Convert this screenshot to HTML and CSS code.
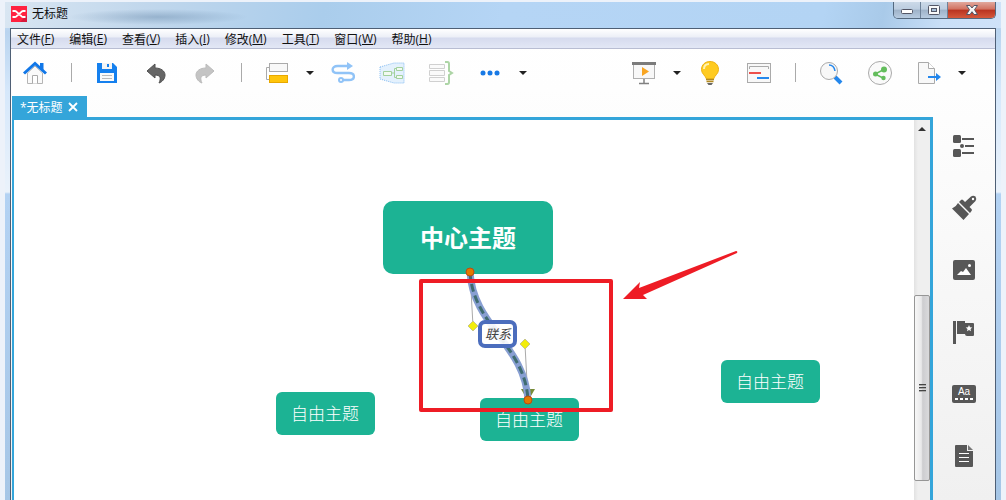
FILE: index.html
```html
<!DOCTYPE html>
<html lang="zh-CN">

<head>
    <meta charset="UTF-8">
    <meta name="viewport" content="width=device-width, initial-scale=1.0">
    <title>无标题</title>
    <link rel="stylesheet" href="styles.css">
</head>

<body>
    <div class="window">
        <header class="titlebar">
            <svg class="logo" width="16" height="16" viewBox="0 0 16 16">
                <rect width="16" height="16" fill="#ff2240" />
                <path d="M9 16L16 9V16Z" fill="#d8193c" />
                <path d="M1.500 5H4C6 5 6 7.500 8 7.500s2-2.500 4-2.500h2.500M1.500 11H4C6 11 6 8.500 8 8.500s2 2.500 4 2.500h2.500" fill="none" stroke="#fff" stroke-width="2" />
            </svg>
            <h1>无标题</h1>
            <div class="smudge"></div>
            <div class="window-buttons">
                <button class="min" aria-label="最小化">
                    <svg width="14" height="10" viewBox="0 0 14 10"><rect x="1.500" y="4.500" width="11" height="4" rx="1" fill="#fff" stroke="#535666" /></svg>
                </button>
                <button class="max" aria-label="最大化">
                    <svg width="14" height="12" viewBox="0 0 14 12"><rect x="1.500" y="1.500" width="11" height="9" rx="1" fill="#f8f8f8" stroke="#535666" /><rect x="4.500" y="4.500" width="5" height="3" fill="#a9c0d8" stroke="#535666" /></svg>
                </button>
                <button class="close" aria-label="关闭">
                    <svg width="14" height="12" viewBox="0 0 14 12"><path d="M1.500 1.500H5L7 4L9 1.500H12.500L9.500 5.700L12.500 10.500H9L7 7.700L5 10.500H1.500L4.500 5.700Z" fill="#f6f6f6" stroke="#535666" /></svg>
                </button>
            </div>
        </header>

        <div class="frame">
            <nav class="menubar">
                <button>文件(<u>F</u>)</button>
                <button>编辑(<u>E</u>)</button>
                <button>查看(<u>V</u>)</button>
                <button>插入(<u>I</u>)</button>
                <button>修改(<u>M</u>)</button>
                <button>工具(<u>T</u>)</button>
                <button>窗口(<u>W</u>)</button>
                <button>帮助(<u>H</u>)</button>
            </nav>

            <div class="toolbar">
                <button class="tool" aria-label="主页">
                    <svg width="26" height="24" viewBox="0 0 26 24">
                        <path d="M5.500 12V22.500H20.500V12L13 5Z" fill="#fafafa" stroke="#b5b5b5" />
                        <path d="M10.500 22.500V14.500H15.500V22.500" fill="#fff" stroke="#aaa" />
                        <path d="M2 12.500L13 2.500L24 12.500" fill="none" stroke="#1177e8" stroke-width="3" />
                        <path d="M18 2H21.500V9L18 6Z" fill="#1177e8" />
                    </svg>
                </button>
                <span class="sep"></span>
                <button class="tool" aria-label="保存">
                    <svg width="22" height="22" viewBox="0 0 22 22">
                        <path d="M1 1H17L21 5V21H1Z" fill="#1580ee" />
                        <rect x="6" y="1" width="10" height="6" fill="#f4f4f4" />
                        <rect x="11" y="2" width="2" height="3" fill="#1580ee" />
                        <rect x="4" y="11" width="14" height="8" fill="#fafafa" />
                        <path d="M6 13.500H16M6 16.500H16" stroke="#bbb" />
                    </svg>
                </button>
                <button class="tool" aria-label="撤销">
                    <svg width="22" height="24" viewBox="0 0 22 24">
                        <path d="M2 10L10 3V7C16 7 20 10 20 14C20 18 17 21 14 22C16 18 16 14 10 14V17Z" fill="#666" stroke="#505050" />
                    </svg>
                </button>
                <button class="tool" aria-label="重做">
                    <svg width="22" height="24" viewBox="0 0 22 24">
                        <path d="M20 10L12 3V7C6 7 2 10 2 14C2 18 5 21 8 22C6 18 6 14 12 14V17Z" fill="#c4c4c4" stroke="#bbb" />
                    </svg>
                </button>
                <span class="sep"></span>
                <button class="tool" aria-label="主题">
                    <svg width="24" height="22" viewBox="0 0 24 22">
                        <path d="M5 5.500H1.500V17.500H5" fill="none" stroke="#aaa" />
                        <rect x="4.500" y="1.500" width="18" height="8" fill="#f8f8f8" stroke="#aaa" />
                        <rect x="4.500" y="13.500" width="18" height="7" fill="#ffc50c" stroke="#e8a800" />
                    </svg>
                </button>
                <button class="caret" aria-label="更多主题"></button>
                <button class="tool" aria-label="联系">
                    <svg width="24" height="24" viewBox="0 0 24 24">
                        <path d="M16 5H6.500C0 5 0 12 6.500 12H18C24.500 12 24.500 19 18 19H12" fill="none" stroke="#90c3f7" stroke-width="2.400" />
                        <path d="M16 1L22 5L16 9Z" fill="#90c3f7" />
                        <circle cx="10" cy="19" r="2" fill="#fff" stroke="#90c3f7" stroke-width="2" />
                    </svg>
                </button>
                <button class="tool" aria-label="外框">
                    <svg width="26" height="22" viewBox="0 0 26 22">
                        <path d="M1 5L15 1H25V21H15L1 17Z" fill="#e4f1fd" stroke="#84bbf2" stroke-dasharray="1 1" />
                        <path d="M12 11H15.500M17 6.500H15.500V15.500H17" fill="none" stroke="#a3d19d" />
                        <path d="M4.500 9.500H12.500V13.500H4.500ZM17.500 5.500H23.500V8.500H17.500ZM17.500 13.500H23.500V16.500H17.500Z" fill="#f2faf2" stroke="#a3d19d" />
                    </svg>
                </button>
                <button class="tool" aria-label="概要">
                    <svg width="26" height="24" viewBox="0 0 26 24">
                        <path d="M1.500 3.500H16.500V7.500H1.500ZM1.500 9.500H16.500V14.500H1.500ZM1.500 16.500H16.500V20.500H1.500Z" fill="#fafafa" stroke="#d0d0d0" />
                        <path d="M17 1H19.500Q21 1 21 3V10L24 12L21 14V21Q21 23 19.500 23H17" fill="none" stroke="#add5a6" stroke-width="2" />
                    </svg>
                </button>
                <button class="tool" aria-label="更多">
                    <svg width="20" height="6" viewBox="0 0 20 6"><circle cx="3" cy="3" r="2.500" fill="#1879e5" /><circle cx="10" cy="3" r="2.500" fill="#1879e5" /><circle cx="17" cy="3" r="2.500" fill="#1879e5" /></svg>
                </button>
                <button class="caret" aria-label="更多选项"></button>

                <span class="space"></span>

                <button class="tool" aria-label="演示">
                    <svg width="26" height="24" viewBox="0 0 26 24">
                        <rect x="2.500" y="3.500" width="21" height="14" fill="#f8f8f8" stroke="#b0b0b0" />
                        <rect x="1" y="1" width="24" height="3" fill="#7b7b7b" />
                        <path d="M11 6L18 10.500L11 15Z" fill="#f8a522" />
                        <path d="M13 18V22M8 22.500H18" stroke="#808080" stroke-width="1.500" />
                    </svg>
                </button>
                <button class="caret" aria-label="演示选项"></button>
                <button class="tool" aria-label="头脑风暴">
                    <svg width="20" height="26" viewBox="0 0 20 26">
                        <path d="M10 1.500C5 1.500 1.500 5 1.500 9.500C1.500 14 5.500 15.500 6.500 19H13.500C14.500 15.500 18.500 14 18.500 9.500C18.500 5 15 1.500 10 1.500Z" fill="#ffcb20" stroke="#eeb211" />
                        <path d="M4 9C4 6 6 4 9 4" fill="none" stroke="#fff3b0" stroke-width="2" />
                        <path d="M6 19.500H14M6.500 21.500H13.500" stroke="#b38a1e" stroke-width="1.500" />
                        <path d="M7 23H13L11.500 25H8.500Z" fill="#666" />
                    </svg>
                </button>
                <button class="tool" aria-label="甘特图">
                    <svg width="26" height="22" viewBox="0 0 26 22">
                        <rect x="1.500" y="1.500" width="23" height="19" fill="#f8f8f8" stroke="#aaa" />
                        <path d="M3.500 7V4.500H22.500V7" fill="none" stroke="#aaa" />
                        <path d="M3 11H15" stroke="#ed504c" stroke-width="2" />
                        <path d="M11 16H23" stroke="#2487ec" stroke-width="2" />
                    </svg>
                </button>
                <span class="sep"></span>
                <button class="tool" aria-label="搜索">
                    <svg width="24" height="24" viewBox="0 0 24 24">
                        <path d="M16 16L22 22" stroke="#2487ec" stroke-width="4" />
                        <circle cx="10" cy="10" r="8.500" fill="#f8f8f8" stroke="#aaa" />
                        <path d="M10 4Q15 4 16 10" fill="none" stroke="#2487ec" stroke-width="1.500" />
                    </svg>
                </button>
                <button class="tool" aria-label="分享">
                    <svg width="26" height="26" viewBox="0 0 26 26">
                        <circle cx="13" cy="13" r="11.500" fill="#fafafa" stroke="#aaa" />
                        <path d="M17 9.500L8 14L16 18" fill="none" stroke="#63bd5c" stroke-width="1.500" />
                        <circle cx="17" cy="9.500" r="3" fill="#63bd5c" /><circle cx="8.500" cy="14" r="2.500" fill="#63bd5c" /><circle cx="16.500" cy="18" r="2.200" fill="#63bd5c" />
                    </svg>
                </button>
                <button class="tool" aria-label="导出">
                    <svg width="26" height="24" viewBox="0 0 26 24">
                        <path d="M2.500 1.500H12.500L18.500 7.500V22.500H2.500Z" fill="#f8f8f8" stroke="#aaa" />
                        <path d="M12.500 1.500V7.500H18.500" fill="#fff" stroke="#aaa" />
                        <path d="M12 16H21" stroke="#2487ec" stroke-width="2" />
                        <path d="M20 12L25 16L20 20Z" fill="#2487ec" />
                    </svg>
                </button>
                <button class="caret" aria-label="导出选项"></button>
            </div>

            <div class="workspace">
                <main class="editor">
                    <div class="tabs">
                        <div class="tab">
                            <span>*无标题</span>
                            <button aria-label="关闭标签">
                                <svg width="10" height="10" viewBox="0 0 10 10"><path d="M1 1L9 9M9 1L1 9" stroke="#fff" stroke-width="1.800" /></svg>
                            </button>
                        </div>
                    </div>
                    <div class="sheet">
                        <div class="canvas">
                            <div class="topic central">中心主题</div>
                            <div class="topic free-left">自由主题</div>
                            <div class="topic free-middle">自由主题</div>
                            <div class="topic free-right">自由主题</div>

                            <!-- relationship line with its handles -->
                            <svg class="relation" width="620" height="320" viewBox="0 0 620 320">
                                <path d="M507 269H521L514 281Z" fill="#788c36" />
                                <path d="M456 152L459 206M514 280L511 225" stroke="#aaa" />
                                <path d="M456 152C459 206 511 225 514 280" fill="none" stroke="#889fd2" stroke-width="7" />
                                <path d="M456 152C459 206 511 225 514 280" fill="none" stroke="#3f6c70" stroke-width="3" stroke-dasharray="8 4" />
                                <path d="M459 201L464 206L459 211L454 206ZM511 219L516 224L511 229L506 224Z" fill="#f2ed0c" stroke="#c9c78a" />
                                <circle cx="456" cy="152" r="4" fill="#e27a00" stroke="#bd4b12" />
                                <circle cx="514" cy="280" r="4" fill="#e27a00" stroke="#bd4b12" />
                            </svg>
                            <div class="relation-label">联系</div>

                            <div class="marker"></div>
                            <svg class="pointer" width="116" height="50" viewBox="0 0 116 50">
                                <path d="M0 48L17 31L16 37L113 0Q115 0 114 2L20 44L24 48Z" fill="#ee1c25" />
                            </svg>
                        </div>
                        <div class="scrollbar">
                            <button class="scroll-up" aria-label="向上滚动"></button>
                            <div class="thumb"><i></i><i></i><i></i></div>
                        </div>
                    </div>
                </main>

                <aside class="sidebar">
                    <button aria-label="大纲">
                        <svg width="22" height="22" viewBox="0 0 22 22" fill="#575757">
                            <rect width="8" height="8" rx="1.500" /><rect y="14" width="8" height="8" rx="1.500" /><circle cx="9" cy="11" r="2" />
                            <path d="M9 3H21V5H9ZM12 10H21V12H12ZM9 17H21V19H9Z" />
                        </svg>
                    </button>
                    <button aria-label="格式">
                        <svg width="26" height="26" viewBox="0 0 26 26">
                            <path d="M7 8L18 19L12.500 25L1 13.500Q5 12 7 8Z" fill="#575757" />
                            <path d="M8 7L10 5Q11 4 12 5L14 7L20 1.500Q22 0 24.500 1.500Q26 4 24.500 6L18.500 12L20.500 14Q21.500 15 20.500 16L19 18Z" fill="#575757" />
                            <circle cx="22" cy="4" r="1.200" fill="#fff" />
                        </svg>
                    </button>
                    <button aria-label="图片">
                        <svg width="22" height="20" viewBox="0 0 22 20">
                            <rect width="22" height="20" rx="2" fill="#575757" />
                            <path d="M4 15L8 11L10 12L13 8L18 15Z" fill="#fff" /><circle cx="16.500" cy="5.500" r="1.500" fill="#fff" />
                        </svg>
                    </button>
                    <button aria-label="图标">
                        <svg width="22" height="24" viewBox="0 0 22 24">
                            <path d="M0 1H3V24H0ZM4 1H12V3H20Q21 3 21 4V15Q21 16 20 16H14Q12 16 12 14H4Z" fill="#575757" />
                            <path d="M16 5L17 7.300L19.300 7.500L17.500 9L18 11.300L16 10L14 11.300L14.500 9L12.700 7.500L15 7.300Z" fill="#fff" />
                        </svg>
                    </button>
                    <button class="notes" aria-label="批注">
                        <span>Aa</span>
                    </button>
                    <button aria-label="备注">
                        <svg width="18" height="22" viewBox="0 0 18 22">
                            <path d="M1 0H12V6H18V21Q18 22 17 22H1Q0 22 0 21V1Q0 0 1 0Z" fill="#575757" />
                            <path d="M13 0L18 5H13Z" fill="#777" />
                            <path d="M4 8.500H14M4 12.500H14M4 16.500H14" stroke="#fff" />
                        </svg>
                    </button>
                </aside>
            </div>
        </div>
    </div>
</body>

</html>
```

FILE: styles.css
```css
* {
    padding: 0;
    margin: 0;
    box-sizing: border-box;
}

body {
    display: flex;
    min-height: 100vh;
    padding: 2px 5px 0;
    background-color: #edf2fa;
    font-family: "Open Sans", "Noto Sans CJK SC", sans-serif;
    font-size: 12px;
    color: #111;
}

button {
    display: flex;
    align-items: center;
    justify-content: center;
    border: none;
    background: none;
    font: inherit;
    color: inherit;
    cursor: pointer;
}

svg {
    display: block;
}

.window {
    flex: 1;
    display: flex;
    flex-direction: column;
    padding: 0 5px;
    background: linear-gradient(#d3e5f7 0, #b9d4ef 30px, #d6e8fb 90px, #eaf2fb 190px, #b3d2f3 192px, #a6c6e6);
}

/* title bar */
.titlebar {
    display: flex;
    align-items: flex-start;
    height: 26px;
    margin: 0 -5px;
    padding: 0 5px 0 6px;
    background: linear-gradient(100deg, #d9e6f2 0, #c1d7ec 14%, #aacdec 32%, #b5d5f5 50%, #b3d4f4 82%, #a9cae9 88%, #c9dff7 94%, #cfe2f8);
}

.logo {
    margin-top: 4px;
}

.titlebar h1 {
    margin-left: 5px;
    font-size: 12px;
    font-weight: normal;
    line-height: 24px;
}

.smudge {
    width: 180px;
    height: 16px;
    margin-top: 7px;
    background: radial-gradient(closest-side, rgba(90, 125, 160, 0.4), transparent);
}

.window-buttons {
    display: flex;
    margin-left: auto;
    border: 1px solid #54697f;
    border-top: none;
    border-radius: 0 0 5px 5px;
    overflow: hidden;
}

.window-buttons button {
    width: 27px;
    height: 16px;
    border-right: 1px solid #6e8299;
    background: linear-gradient(#cbd9e8 0, #bccde0 45%, #9eb2c8 50%, #b7cbe0);
}

.window-buttons .close {
    width: 47px;
    border-right: none;
    background: linear-gradient(#e1a89d 0, #d17160 45%, #b93320 50%, #d5593c);
}

.frame {
    flex: 1;
    display: flex;
    flex-direction: column;
    border: 1px solid #4e5f75;
    border-bottom: none;
    background: linear-gradient(#fff 0, #fefefe 60px, #f0f0f0);
}

/* menu */
.menubar {
    display: flex;
    gap: 15px;
    height: 20px;
    padding: 0 6px;
    border-bottom: 1px solid #b8bdd2;
    background: linear-gradient(#fff 0, #eceff7 8px, #d6dbee 9px, #e2e7f5);
}

/* toolbar */
.toolbar {
    display: flex;
    align-items: center;
    gap: 1px;
    height: 47px;
    padding-right: 25px;
}

.tool {
    width: 48px;
    height: 40px;
}

.sep {
    width: 22px;
    height: 19px;
    background: linear-gradient(#aaa, #aaa) center / 1px 100% no-repeat;
}

.caret {
    width: 16px;
    height: 40px;
}

.caret::after {
    content: "";
    border: 4px solid transparent;
    border-top-color: #222;
    border-bottom: none;
}

.space {
    flex: 1;
}

/* editor */
.workspace {
    flex: 1;
    display: flex;
}

.editor {
    flex: 1;
    display: flex;
    flex-direction: column;
    padding-left: 1px;
}

.tabs {
    display: flex;
    height: 21px;
}

.tab {
    display: flex;
    align-items: center;
    gap: 5px;
    padding: 0 9px 0 8px;
    background-color: #34a5da;
    color: #fff;
}

.sheet {
    flex: 1;
    display: flex;
    border: 3px solid #34a5da;
    border-left-width: 2px;
    border-bottom: none;
    background-color: #fff;
}

.canvas {
    position: relative;
    flex: 1;
    overflow: hidden;
}

.topic {
    position: absolute;
    padding: 9px 16px 9px 15px;
    border-radius: 6px;
    background-color: #1cb394;
    color: #fff;
    font-size: 17px;
    font-weight: 300;
    line-height: 25px;
    white-space: nowrap;
}

.central {
    left: 369px;
    top: 81px;
    padding: 19px 37px;
    border-radius: 10px;
    font-size: 24px;
    font-weight: bold;
    line-height: 35px;
}

.free-left {
    left: 262px;
    top: 272px;
}

.free-middle {
    left: 466px;
    top: 278px;
}

.free-right {
    left: 707px;
    top: 240px;
}

.relation {
    position: absolute;
    left: 0;
    top: 0;
}

.relation-label {
    position: absolute;
    left: 464px;
    top: 200px;
    padding: 0 2px 0 3px;
    border: 4px solid #4b6dbd;
    border-radius: 7px;
    background-color: rgba(255, 255, 255, 0.9);
    color: #444;
    font-size: 13px;
    font-style: italic;
    line-height: 20px;
}

.marker {
    position: absolute;
    left: 405px;
    top: 159px;
    width: 194px;
    height: 133px;
    border: 4px solid #ee1c25;
    border-radius: 2px;
}

.pointer {
    position: absolute;
    left: 609px;
    top: 131px;
}

.scrollbar {
    display: flex;
    flex-direction: column;
    justify-content: space-between;
    width: 16px;
    padding-bottom: 19px;
    background: linear-gradient(90deg, #e2e2e2, #efefef 4px);
}

.scroll-up {
    height: 18px;
}

.scroll-up::after {
    content: "";
    border: 4px solid transparent;
    border-bottom-color: #333;
    border-top: none;
}

.thumb {
    display: flex;
    flex-direction: column;
    align-items: center;
    justify-content: center;
    gap: 1px;
    height: 186px;
    border: 1px solid #969696;
    border-radius: 2px;
    background: linear-gradient(90deg, #f7f7f7, #e9e9ea 45%, #cdcdd0 55%, #dadadc);
}

.thumb i {
    width: 7px;
    height: 2px;
    border-top: 1px solid #444;
    border-bottom: 1px solid #aaa;
}

/* right panel */
.sidebar {
    display: flex;
    flex-direction: column;
    padding-top: 19px;
}

.sidebar button {
    width: 62px;
    height: 62px;
}

.notes span {
    width: 24px;
    height: 18px;
    border-radius: 2px;
    background: repeating-linear-gradient(90deg, #fff 0 3px, #575757 3px 5px) 3px 13px / 18px 2px no-repeat #575757;
    color: #fff;
    font-family: "Liberation Sans", Arial, sans-serif;
    font-size: 10px;
    line-height: 13px;
}
```
